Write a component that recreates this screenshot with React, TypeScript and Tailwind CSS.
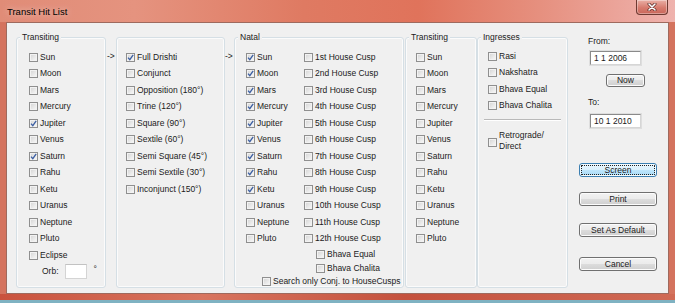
import type { ReactNode } from "react";

function Box({ checked }: { checked?: boolean }) {
  return (
    <span className="relative inline-flex h-[9px] w-[9px] shrink-0 border border-[#8f8f8f] bg-[linear-gradient(135deg,#d3d3d3,#fafafa)] shadow-[inset_0_0_0_1px_#f2f2f2]">
      {checked && (
        <svg viewBox="0 0 7 7" className="absolute inset-0 h-[7px] w-[7px]">
          <path d="M1 3.6 L2.8 5.6 L6.2 0.8" fill="none" stroke="#3c5fa3" strokeWidth="1.3" />
        </svg>
      )}
    </span>
  );
}

function Check({ label, checked, className = "h-[16.5px]" }: { label: string; checked?: boolean; className?: string }) {
  return (
    <div className={`flex items-center gap-[2px] whitespace-nowrap ${className}`}>
      <Box checked={checked} />
      <span>{label}</span>
    </div>
  );
}

function Group({ title, className, children }: { title?: string; className: string; children: ReactNode }) {
  return (
    <fieldset className={`rounded-[3px] border border-[#d5dfe5] shadow-[inset_0_0_0_1px_#fbfbfb] ${className}`}>
      {title && <legend className="ml-[3px] bg-[#f0f0f0] px-[2px] leading-[10px]">{title}</legend>}
      {children}
    </fieldset>
  );
}

function Button({ children, className, primary }: { children: ReactNode; className: string; primary?: boolean }) {
  return (
    <div
      className={`flex items-center justify-center rounded-[3px] border leading-none ${
        primary
          ? "border-[#3c7fb1] bg-[linear-gradient(to_bottom,#eaf6fd_0%,#d9f0fc_50%,#bee6fd_50%,#a7d9f5_100%)] shadow-[inset_0_0_0_1px_#f4fbff] outline-1 outline-offset-[-3px] outline-[#222] outline-dotted"
          : "border-[#707070] bg-[linear-gradient(to_bottom,#f2f2f2_0%,#ebebeb_50%,#dddddd_50%,#cfcfcf_100%)] shadow-[inset_0_0_0_1px_#fcfcfc]"
      } ${className}`}
    >
      {children}
    </div>
  );
}

function DateBox({ value, className }: { value: string; className: string }) {
  return (
    <div className={`h-[16px] w-[53px] border border-[#dedede] ${className}`}>
      <div className="flex h-full items-center border border-[#8a8a8a] border-r-[#d6d6d6] border-b-[#d6d6d6] bg-white pl-[3px] pt-[1px]">
        {value}
      </div>
    </div>
  );
}

const planets = ["Sun", "Moon", "Mars", "Mercury", "Jupiter", "Venus", "Saturn", "Rahu", "Ketu", "Uranus", "Neptune", "Pluto"];
const aspects = [
  "Full Drishti",
  "Conjunct",
  "Opposition (180°)",
  "Trine (120°)",
  "Square (90°)",
  "Sextile (60°)",
  "Semi Square (45°)",
  "Semi Sextile (30°)",
  "Inconjunct (150°)",
];
const houses = ["1st", "2nd", "3rd", "4th", "5th", "6th", "7th", "8th", "9th", "10th", "11th", "12th"];
const natalOn = ["Sun", "Moon", "Mars", "Mercury", "Jupiter", "Venus", "Saturn", "Rahu", "Ketu"];

export default function App() {
  return (
    <div className="flex h-[303px] w-[675px] flex-col overflow-hidden bg-[#d4735e] font-['Liberation_Sans',Arial,sans-serif] text-[8.5px] text-[#1b1b1b]">
      {/* title bar */}
      <div className="flex h-[22px] shrink-0 items-start justify-between bg-[linear-gradient(to_right,#e08c77_0%,#e5937f_20%,#df7a62_45%,#e0735b_62%,#e6907f_80%,#efb3ae_100%)] pl-[7px] pr-[7px]">
        <span className="pt-[6px] text-[9.5px] leading-[11px] text-black [text-shadow:0_0_6px_rgba(255,255,255,0.7)]">
          Transit Hit List
        </span>
        <div className="flex h-[15px] w-[32px] items-center justify-center rounded-b-[4px] border border-t-0 border-[#6e3a32] bg-[linear-gradient(to_bottom,#eab0a6,#d77b6e_55%,#c9675a)] shadow-[inset_0_0_0_1px_rgba(255,255,255,0.35)]">
          <svg viewBox="0 0 10 8" className="h-[8px] w-[10px]">
            <path d="M2 1 L8 7 M8 1 L2 7" stroke="#5b2a24" strokeWidth="3" strokeLinecap="round" />
            <path d="M2 1 L8 7 M8 1 L2 7" stroke="#ffffff" strokeWidth="1.6" strokeLinecap="round" />
          </svg>
        </div>
      </div>

      {/* body */}
      <div className="flex h-[272px] shrink-0 px-[6px]">
        <div className="flex flex-1 items-start border border-[#9e6a5e] bg-[#f0f0f0] pl-[9px] pt-[9px]">
          <Group title="Transiting" className="h-[256px] w-[90px]">
            <div className="pl-[12px] pt-[6.75px]">
              {planets.map((p) => (
                <Check key={p} label={p} checked={p === "Jupiter" || p === "Saturn"} />
              ))}
              <Check label="Eclipse" />
              <div className="flex h-[16px] items-center">
                <span className="ml-[13px]">Orb:</span>
                <div className="ml-[6px] h-[15px] w-[22px] border border-[#d4d4d4] border-t-[#c2c2c2] bg-white" />
                <span className="ml-[7px] -translate-y-[2px]">°</span>
              </div>
            </div>
          </Group>

          <div className="w-[10px] pl-[1px] pt-[19px] leading-[11px]">-&gt;</div>

          <Group className="mt-[5px] h-[251px] w-[109px]">
            <div className="pl-[9px] pt-[10.75px]">
              {aspects.map((a, i) => (
                <Check key={a} label={a} checked={i === 0} />
              ))}
            </div>
          </Group>

          <div className="w-[9px] pt-[19px] leading-[11px]">-&gt;</div>

          <Group title="Natal" className="h-[256px] w-[170px]">
            <div className="pl-[11px] pt-[6.75px]">
              <div className="flex">
                <div className="w-[58px]">
                  {planets.map((p) => (
                    <Check key={p} label={p} checked={natalOn.includes(p)} />
                  ))}
                </div>
                <div>
                  {houses.map((h) => (
                    <Check key={h} label={`${h} House Cusp`} />
                  ))}
                </div>
              </div>
              <Check label="Bhava Equal" className="ml-[70px] h-[15px]" />
              <Check label="Bhava Chalita" className="ml-[70px] h-[14px]" />
              <Check label="Search only Conj. to HouseCusps" className="ml-[16px] h-[11px]" />
            </div>
          </Group>

          <Group title="Transiting" className="ml-[1px] h-[256px] w-[72px]">
            <div className="pl-[10px] pt-[6.75px]">
              {planets.map((p) => (
                <Check key={p} label={p} />
              ))}
            </div>
          </Group>

          <Group title="Ingresses" className="h-[256px] w-[91px]">
            <div className="pl-[10px] pt-[6px]">
              {["Rasi", "Nakshatra", "Bhava Equal", "Bhava Chalita"].map((l) => (
                <Check key={l} label={l} />
              ))}
            </div>
            <div className="mx-[6px] mt-[5px] h-[2px] border-t border-b border-t-[#b9b9b9] border-b-white" />
            <div className="mt-[9px] flex items-start gap-[2px] pl-[10px] leading-[11px]">
              <span className="mt-[8px]">
                <Box />
              </span>
              <span>
                Retrograde/
                <br />
                Direct
              </span>
            </div>
          </Group>

          <div className="flex flex-col">
            <div className="mt-[4px] pl-[20px] leading-[11px]">From:</div>
            <DateBox value="1 1 2006" className="ml-[21px] mt-[3px]" />
            <Button className="ml-[38px] mt-[8px] h-[13px] w-[39px]">Now</Button>
            <div className="mt-[10px] pl-[20px] leading-[11px]">To:</div>
            <DateBox value="10 1 2010" className="ml-[21px] mt-[5px]" />
            <Button primary className="ml-[11px] mt-[34px] h-[14px] w-[78px]">
              Screen
            </Button>
            <Button className="ml-[11px] mt-[15px] h-[14px] w-[78px]">Print</Button>
            <Button className="ml-[11px] mt-[17px] h-[14px] w-[78px]">Set As Default</Button>
            <Button className="ml-[11px] mt-[20px] h-[14px] w-[78px]">Cancel</Button>
          </div>
        </div>
      </div>

      {/* bottom frame */}
      <div className="h-[6px] shrink-0 bg-[linear-gradient(to_right,#c9523d,#d8755f_30%,#c4513d_60%,#d06a55)]" />
      <div className="h-[3px] shrink-0 bg-[#7fb2c2]" />
    </div>
  );
}
